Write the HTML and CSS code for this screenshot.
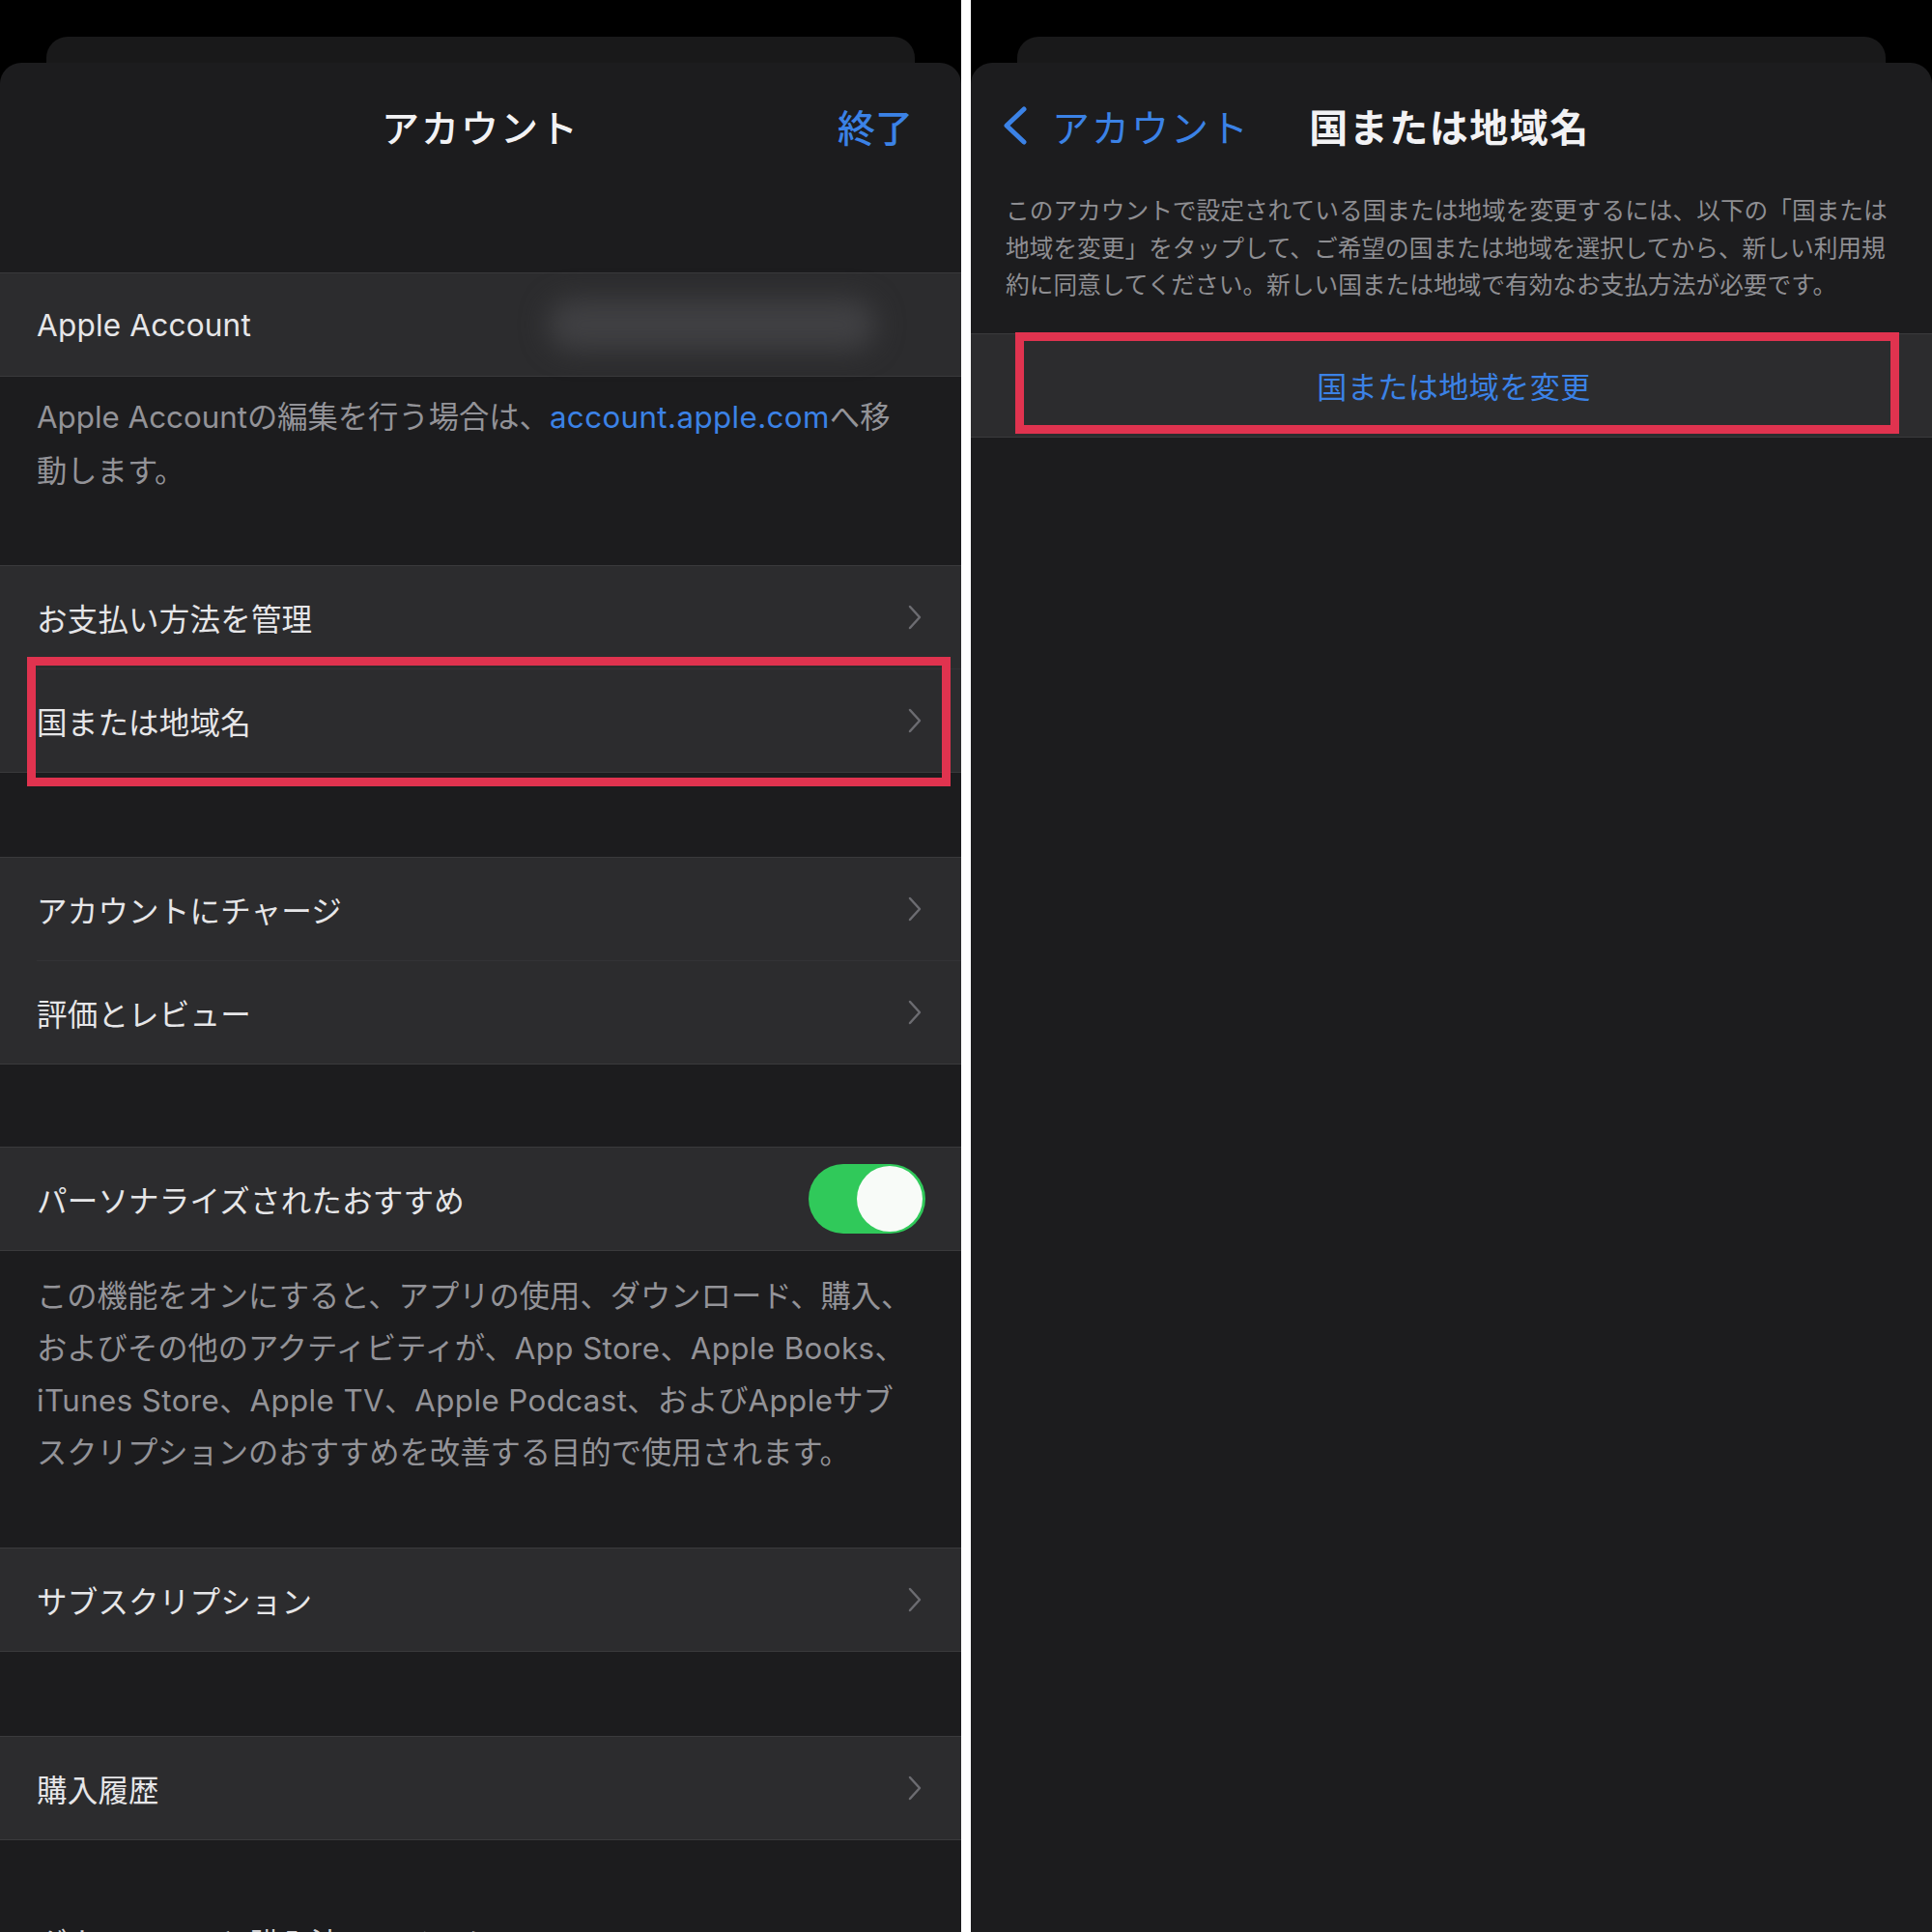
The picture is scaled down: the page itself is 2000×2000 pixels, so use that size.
FILE: index.html
```html
<!DOCTYPE html>
<html lang="ja">
<head>
<meta charset="utf-8">
<title>アカウント</title>
<link rel="stylesheet" href="styles.css">
</head>
<body>
<div class="screen">
  <section class="panel">
    <div class="back-card"></div>
    <div class="sheet">
      <header class="nav nav-main">
        <span></span>
        <h1 class="nav-title">アカウント</h1>
        <span class="nav-done">終了</span>
      </header>

      <div class="group g-first">
        <div class="row">
          <span class="row-label">Apple Account</span>
          <span class="blurred"></span>
        </div>
      </div>
      <p class="footer f-account">Apple Accountの編集を行う場合は、<span class="link">account.apple.com</span>へ移<br>動します。</p>

      <div class="group g-pay">
        <div class="row">
          <span class="row-label">お支払い方法を管理</span>
          <svg class="chev" viewBox="0 0 14 26"><polyline points="2,2 12,13 2,24"/></svg>
        </div>
        <div class="sep"></div>
        <div class="row">
          <span class="row-label">国または地域名</span>
          <svg class="chev" viewBox="0 0 14 26"><polyline points="2,2 12,13 2,24"/></svg>
        </div>
        <div class="mark mark-left"></div>
      </div>

      <div class="group g-gap">
        <div class="row">
          <span class="row-label">アカウントにチャージ</span>
          <svg class="chev" viewBox="0 0 14 26"><polyline points="2,2 12,13 2,24"/></svg>
        </div>
        <div class="sep"></div>
        <div class="row">
          <span class="row-label">評価とレビュー</span>
          <svg class="chev" viewBox="0 0 14 26"><polyline points="2,2 12,13 2,24"/></svg>
        </div>
      </div>

      <div class="group g-gap2">
        <div class="row">
          <span class="row-label">パーソナライズされたおすすめ</span>
          <span class="toggle"><span class="knob"></span></span>
        </div>
      </div>
      <p class="footer f-reco">この機能をオンにすると、アプリの使用、ダウンロード、購入、<br>およびその他のアクティビティが、<span class="lat">App Store</span>、<span class="lat">Apple Books</span>、<br><span class="lat">iTunes Store</span>、<span class="lat">Apple TV</span>、<span class="lat">Apple Podcast</span>、および<span class="lat">Apple</span>サブ<br>スクリプションのおすすめを改善する目的で使用されます。</p>

      <div class="group g-sub">
        <div class="row">
          <span class="row-label">サブスクリプション</span>
          <svg class="chev" viewBox="0 0 14 26"><polyline points="2,2 12,13 2,24"/></svg>
        </div>
      </div>

      <div class="group g-gap">
        <div class="row">
          <span class="row-label">購入履歴</span>
          <svg class="chev" viewBox="0 0 14 26"><polyline points="2,2 12,13 2,24"/></svg>
        </div>
      </div>

      <div class="tail">ダウンロードと購入済みアイテム</div>
    </div>
  </section>

  <section class="panel">
    <div class="back-card"></div>
    <div class="sheet">
      <header class="nav nav-detail">
        <span class="nav-back">
          <svg class="back-chev" viewBox="0 0 30 40"><polyline points="25,3 7,20 25,37"/></svg>
          <span>アカウント</span>
        </span>
        <h1 class="nav-title bold">国または地域名</h1>
        <span></span>
      </header>
      <p class="desc">このアカウントで設定されている国または地域を変更するには、以下の「国または<br>地域を変更」をタップして、ご希望の国または地域を選択してから、新しい利用規<br>約に同意してください。新しい国または地域で有効なお支払方法が必要です。</p>
      <div class="group g-button">
        <div class="row row-center">
          <span class="action">国または地域を変更</span>
        </div>
        <div class="mark mark-right"></div>
      </div>
    </div>
  </section>
</div>
</body>
</html>
```
FILE: styles.css
```css
* { box-sizing: border-box; }

body {
  margin: 0;
  background: #ffffff;
  font-family: Inter, "Noto Sans CJK JP", "Noto Sans", sans-serif;
}

.screen {
  display: flex;
  gap: 10px;
  width: 2000px;
  height: 2000px;
}

.panel {
  width: 995px;
  height: 2000px;
  background: #000;
  display: flex;
  flex-direction: column;
  overflow: hidden;
}

.back-card {
  flex-shrink: 0;
  margin: 38px 48px 0;
  height: 27px;
  background: #19191a;
  border-radius: 22px 22px 0 0;
}

.sheet {
  flex: 1;
  background: #1c1c1e;
  border-radius: 22px 22px 0 0;
  display: flex;
  flex-direction: column;
}

.nav {
  height: 130px;
  flex-shrink: 0;
  display: grid;
  grid-template-columns: 1fr auto 1fr;
  align-items: center;
}

.nav-main { padding: 0 50px 0 50px; }
.nav-detail { padding: 0 34px 0 30px; }

.nav-title {
  margin: 0;
  font-size: 39px;
  font-weight: 500;
  color: #f2f2f4;
  letter-spacing: 2px;
}

.nav-title.bold {
  font-weight: 700;
  font-size: 40px;
  letter-spacing: 1.5px;
}

.nav-done {
  justify-self: end;
  font-size: 39px;
  font-weight: 500;
  color: #3b82e6;
}

.nav-back {
  display: flex;
  align-items: center;
  gap: 24px;
  color: #3b82e6;
  font-size: 39px;
  letter-spacing: 2px;
}

.back-chev {
  width: 30px;
  height: 40px;
  fill: none;
  stroke: #3b82e6;
  stroke-width: 5;
  stroke-linecap: round;
  stroke-linejoin: round;
}

.group {
  position: relative;
  flex-shrink: 0;
  background: #2c2c2e;
  border-top: 1px solid #3a3a3c;
  border-bottom: 1px solid #3a3a3c;
}

.g-first { margin-top: 87px; }
.g-gap { margin-top: 87px; }
.g-gap2 { margin-top: 85px; }

.row {
  height: 106px;
  display: flex;
  align-items: center;
  padding: 0 33px 0 38px;
}

.row-center { justify-content: center; }

.sep {
  height: 1px;
  margin-left: 38px;
  background: #333336;
}

.row-label {
  font-size: 31.5px;
  color: #e6e6e8;
  white-space: nowrap;
  letter-spacing: 0.2px;
}

.chev {
  margin-left: auto;
  margin-right: 8px;
  width: 14px;
  height: 26px;
  fill: none;
  stroke: #6c6c71;
  stroke-width: 2.5;
  stroke-linecap: round;
  stroke-linejoin: round;
}

.blurred {
  margin-left: auto;
  margin-right: 55px;
  width: 340px;
  height: 52px;
  border-radius: 26px;
  background: #404043;
  filter: blur(14px);
}

.toggle {
  margin-left: auto;
  margin-right: 4px;
  width: 121px;
  height: 72px;
  border-radius: 36px;
  background: #30c95a;
  display: flex;
  align-items: center;
  justify-content: flex-end;
  padding: 2px 3px;
}

.knob {
  width: 68px;
  height: 68px;
  border-radius: 50%;
  background: #f8fbf8;
}

.footer {
  margin: 0;
  flex-shrink: 0;
  padding: 0 38px;
  font-size: 31.3px;
  color: #939398;
  white-space: nowrap;
}

.lat { letter-spacing: 0.4px; }

.f-account {
  line-height: 56px;
  padding-top: 14px;
  padding-bottom: 69px;
}

.f-reco {
  line-height: 54px;
  padding-top: 20px;
  padding-bottom: 71px;
}

.link { color: #3b82e6; letter-spacing: 0.4px; }

.mark {
  position: absolute;
  border: 9px solid #e0334f;
  pointer-events: none;
}

.mark-left {
  left: 28px;
  top: 94px;
  width: 956px;
  height: 134px;
}

.mark-right {
  left: 46px;
  top: -2px;
  width: 915px;
  height: 105px;
}

.tail {
  flex-shrink: 0;
  margin-top: 88px;
  padding-left: 38px;
  font-size: 31.5px;
  line-height: 40px;
  color: #cfcfd2;
  white-space: nowrap;
}

.desc {
  margin: 0;
  flex-shrink: 0;
  padding: 4px 0 0 36px;
  font-size: 24.7px;
  line-height: 38.5px;
  color: #8e8e92;
  white-space: nowrap;
}

.g-button { margin-top: 30px; }

.action {
  font-size: 31px;
  color: #3b82e6;
  letter-spacing: 0.5px;
}
```
